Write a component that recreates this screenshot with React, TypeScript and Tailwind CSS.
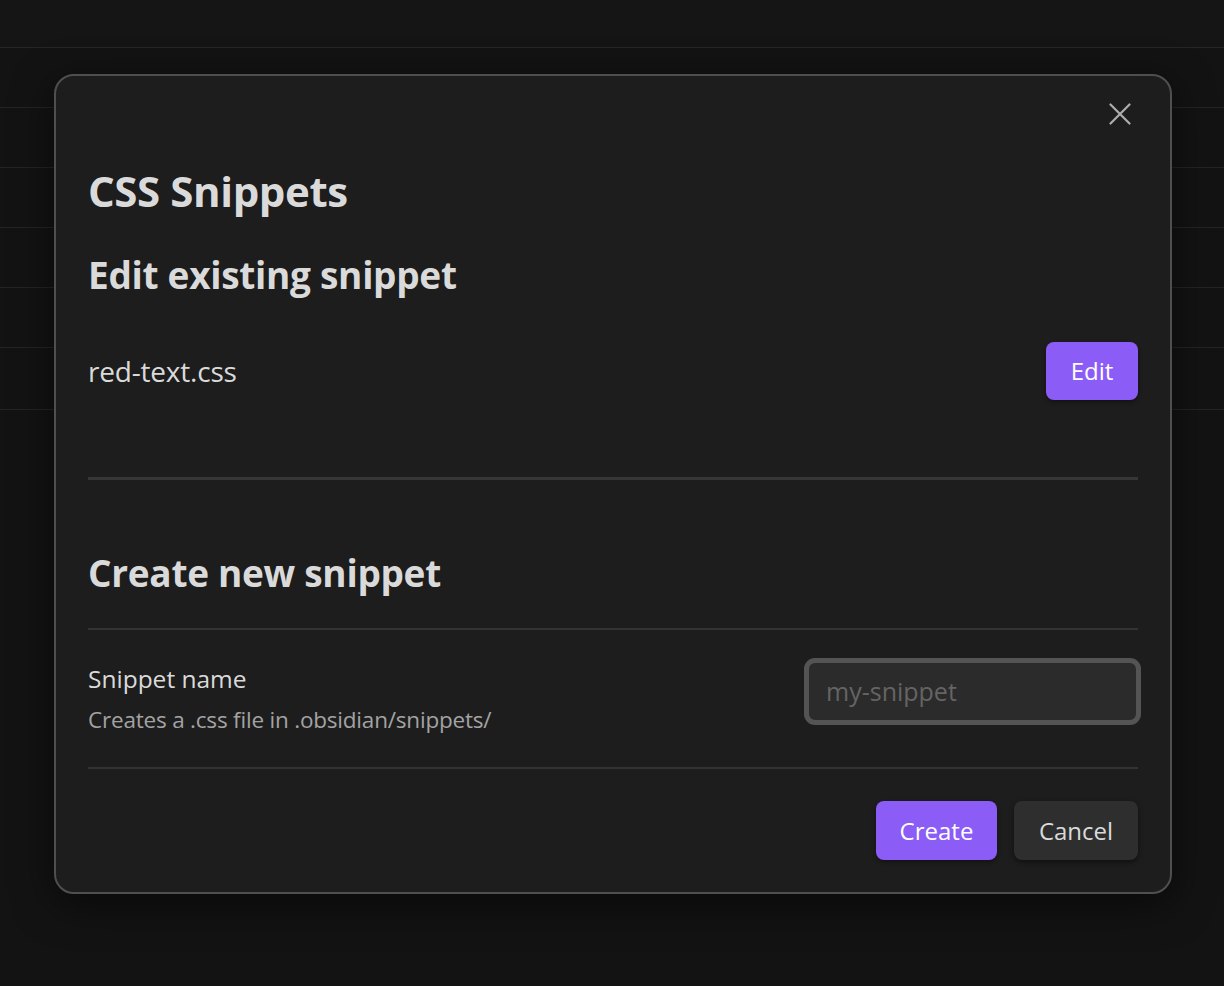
import React from "react";

const font = { fontFamily: '"Open Sans", "Noto Sans", "Liberation Sans", sans-serif' };

export default function App() {
  const rows = [0, 1, 2, 3, 4];
  return (
    <div className="relative w-[1224px] h-[986px] overflow-hidden bg-[#131313]" style={font}>
      {/* background app */}
      <div className="flex flex-col">
        <div className="h-[48px] border-b border-[#262626] bg-[#151515]" />
        {rows.map((r) => (
          <div key={r} className="h-[60px] border-b border-[#242424]" />
        ))}
        <div className="h-[62px] border-b border-[#242424]" />
      </div>

      {/* modal */}
      <div className="absolute left-[54px] top-[74px] w-[1118px] rounded-[20px] border-2 border-[#4f4f4f] bg-[#1d1d1d] shadow-[0_10px_40px_rgba(0,0,0,0.55)] px-[32px] pt-[89px] pb-[32px] text-[#dadada]">
        <button className="absolute right-[39px] top-[27px] flex h-[22px] w-[22px] items-center justify-center text-[#adadad]">
          <svg width="22" height="22" viewBox="0 0 22 22" fill="none" stroke="currentColor" strokeWidth="2.2" strokeLinecap="round">
            <path d="M1.5 1.5 L20.5 20.5 M20.5 1.5 L1.5 20.5" />
          </svg>
        </button>

        <div className="h-[50px] flex items-center text-[42px] font-bold text-[#dadada] tracking-[-0.4px]">CSS Snippets</div>

        <div className="mt-[35px] h-[50px] flex items-center text-[37px] font-bold text-[#dadada] tracking-[-0.3px]">Edit existing snippet</div>

        <div className="mt-[42px] flex h-[58px] items-center justify-between">
          <div className="text-[28px] text-[#dadada] tracking-[-0.2px]">red-text.css</div>
          <button className="h-[58px] w-[92px] rounded-[8px] bg-[#8b5cf6] text-[24px] text-white shadow-[0_2px_4px_rgba(0,0,0,0.4)]">Edit</button>
        </div>

        <div className="mt-[77px] h-[3px] bg-[#363636]" />

        <div className="mt-[68px] h-[50px] flex items-center text-[37px] font-bold text-[#dadada] tracking-[-0.3px]">Create new snippet</div>

        <div className="mt-[30px] border-t-2 border-b-2 border-[#333333] flex h-[141px] items-center justify-between">
          <div className="flex flex-col pt-[2px]">
            <div className="h-[36px] flex items-center text-[24.5px] text-[#dadada]">Snippet name</div>
            <div className="mt-[4px] h-[36px] flex items-center text-[22.5px] text-[#a3a3a3] tracking-[-0.2px]">Creates a .css file in .obsidian/snippets/</div>
          </div>
          <div className="-mr-[3px] mb-[14px] h-[67px] w-[337px] rounded-[11px] border-[5px] border-[#545454] bg-[#2b2b2b] flex items-center px-[17px] text-[25px] text-[#646464]">
            my-snippet
          </div>
        </div>

        <div className="mt-[32px] flex justify-end gap-[17px]">
          <button className="h-[59px] w-[121px] rounded-[8px] bg-[#8b5cf6] text-[24px] text-white shadow-[0_2px_4px_rgba(0,0,0,0.4)]">Create</button>
          <button className="h-[59px] w-[124px] rounded-[8px] bg-[#2e2e2e] text-[24px] text-[#dadada] shadow-[0_2px_5px_rgba(0,0,0,0.5)]">Cancel</button>
        </div>
      </div>
    </div>
  );
}
